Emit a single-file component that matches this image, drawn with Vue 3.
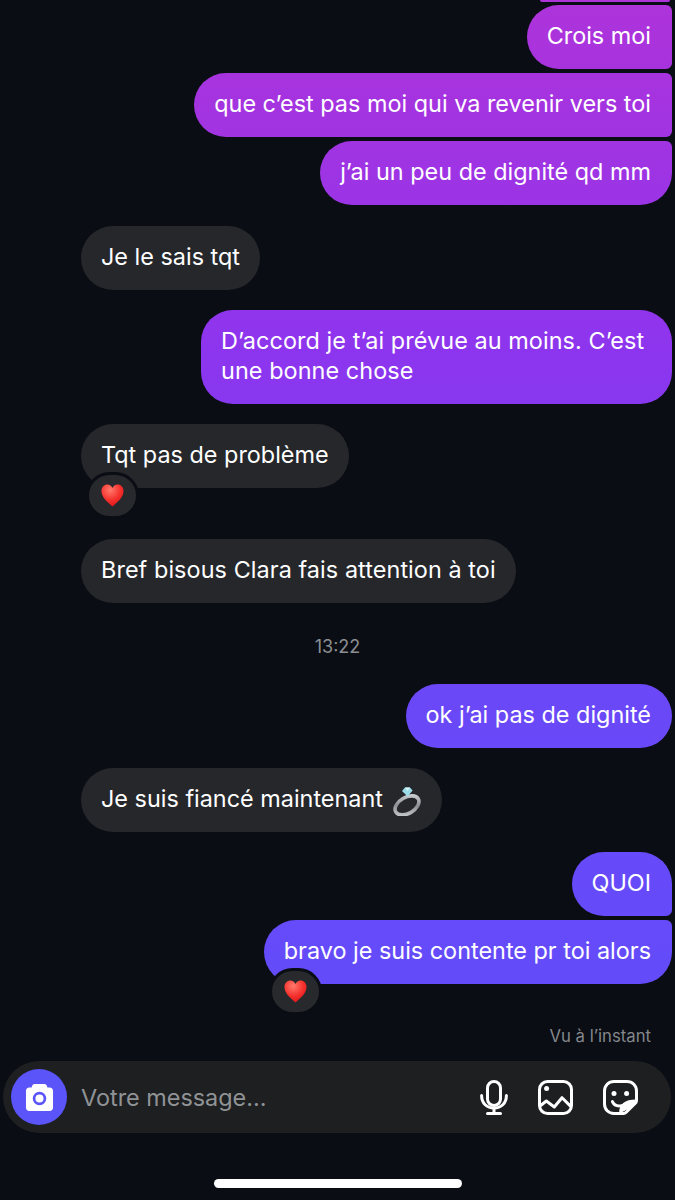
<template>
  <div class="screen">
    <svg class="defs" width="0" height="0">
      <defs>
        <radialGradient id="heartFill" cx="0.4" cy="0.25" r="0.85">
          <stop offset="0" stop-color="#ff7a6c" />
          <stop offset="0.55" stop-color="#f5302c" />
          <stop offset="1" stop-color="#d90f18" />
        </radialGradient>
        <linearGradient id="ringFill" x1="0" y1="1" x2="1" y2="0">
          <stop offset="0" stop-color="#d2d5d7" />
          <stop offset="0.5" stop-color="#8b8f93" />
          <stop offset="1" stop-color="#dcdfe1" />
        </linearGradient>
      </defs>
    </svg>

    <div class="messages">
      <div class="top-sliver"></div>
      <template v-for="msg in messages" :key="msg.id">
        <div v-if="msg.time" class="time">{{ msg.time }}</div>
        <div v-else class="row" :class="[msg.mine ? 'mine' : 'theirs', msg.spacing]">
          <div class="bubble" :class="msg.shape">
            <span class="bubble-text">{{ msg.text }}</span>
            <svg v-if="msg.ring" class="ring" viewBox="0 0 30 30">
              <ellipse cx="15" cy="19.4" rx="13" ry="8" transform="rotate(-30 15 19.4)" fill="none" stroke="url(#ringFill)" stroke-width="3.6" />
              <path d="M10 5 L13 1.4 L18 1.4 L20.6 4.4 L15.6 10.4 Z" fill="#9adbe8" />
              <path d="M13 1.4 L18 1.4 L15.6 5 Z" fill="#d9f5fa" />
            </svg>
            <div v-if="msg.reaction" class="reaction">
              <svg class="heart" viewBox="0 0 24 24">
                <path d="M12 23.4 C5.5 18 .5 13.4 .5 7.4 C.5 3.2 3.4 .6 6.7 .6 C9 .6 11 1.9 12 4.2 C13 1.9 15 .6 17.3 .6 C20.6 .6 23.5 3.2 23.5 7.4 C23.5 13.4 18.5 18 12 23.4 Z" fill="url(#heartFill)" />
              </svg>
            </div>
          </div>
        </div>
      </template>
      <div class="seen">Vu à l’instant</div>
    </div>

    <div class="composer">
      <div class="camera">
        <svg viewBox="0 0 30 30" width="29" height="29">
          <path fill="#fff" d="M10 1 H20 C21.4 1 22.2 1.8 22.7 3.2 L23.2 4.6 H25.4 C27.6 4.6 29 6 29 8.2 V25.4 C29 27.6 27.6 29 25.4 29 H4.6 C2.4 29 1 27.6 1 25.4 V8.2 C1 6 2.4 4.6 4.6 4.6 H6.8 L7.3 3.2 C7.8 1.8 8.6 1 10 1 Z" />
          <circle cx="15" cy="16" r="5.6" fill="none" stroke="#5a54f9" stroke-width="2.8" />
        </svg>
      </div>
      <span class="placeholder">Votre message...</span>
      <div class="tools">
        <svg class="tool mic" viewBox="0 0 28 35" fill="none" stroke="#fff" stroke-width="3">
          <rect x="7.5" y="1.5" width="13" height="24" rx="6.5" />
          <path d="M1.6 15.5 C1.6 23.5 7 28 14 28 C21 28 26.4 23.5 26.4 15.5" stroke-linecap="round" />
          <path d="M14 28 V33.4 M7.5 33.4 H20.5" stroke-linecap="round" />
        </svg>
        <svg class="tool" viewBox="0 0 35 35" fill="none" stroke="#fff" stroke-width="3">
          <rect x="1.5" y="1.5" width="32" height="32" rx="8" />
          <circle cx="8.6" cy="8.6" r="2.5" fill="#fff" stroke="none" />
          <path d="M2 26 L8.3 21 L16.3 27 L24 17.7 L33 26.6" stroke-linejoin="round" />
        </svg>
        <svg class="tool" viewBox="0 0 35 35" fill="none" stroke="#fff" stroke-width="3">
          <path d="M20.5 33.5 H11 C5.5 33.5 1.5 29.5 1.5 24 V11 C1.5 5.5 5.5 1.5 11 1.5 H24 C29.5 1.5 33.5 5.5 33.5 11 V20.5 C33.5 21.5 33 22.5 32.3 23.2 L23.2 32.3 C22.5 33 21.5 33.5 20.5 33.5 Z" stroke-linejoin="round" />
          <path d="M17 33 C16.6 25 22 20.4 33 20.4 C32 24.5 26 28 19.5 31 Z" fill="#fff" stroke-width="1.6" stroke-linejoin="round" />
          <circle cx="11" cy="13.6" r="2.5" fill="#fff" stroke="none" />
          <circle cx="23.6" cy="13.6" r="2.5" fill="#fff" stroke="none" />
          <path d="M9.4 21.6 C11 25 14 26.6 18.6 25.6" stroke-linecap="round" />
        </svg>
      </div>
    </div>

    <div class="home-bar"></div>
  </div>
</template>

<script setup>
const messages = [
  { id: 1, mine: true, text: 'Crois moi', shape: 'tail-both' },
  { id: 2, mine: true, text: 'que c’est pas moi qui va revenir vers toi', shape: 'tail-both' },
  { id: 3, mine: true, text: 'j’ai un peu de dignité qd mm', shape: 'tail-top' },
  { id: 4, mine: false, text: 'Je le sais tqt', spacing: 'switch' },
  { id: 5, mine: true, text: 'D’accord je t’ai prévue au moins. C’est une bonne chose', shape: 'wrapped', spacing: 'loose' },
  { id: 6, mine: false, text: 'Tqt pas de problème', reaction: true, spacing: 'loose' },
  { id: 7, mine: false, text: 'Bref bisous Clara fais attention à toi', shape: 'roomy', spacing: 'reacted' },
  { id: 'time', time: '13:22' },
  { id: 8, mine: true, text: 'ok j’ai pas de dignité', spacing: 'flush' },
  { id: 9, mine: false, text: 'Je suis fiancé maintenant', ring: true, spacing: 'loose' },
  { id: 10, mine: true, text: 'QUOI', shape: 'tail-bottom', spacing: 'loose' },
  { id: 11, mine: true, text: 'bravo je suis contente pr toi alors', shape: 'tail-top', reaction: true }
]
</script>

<style scoped>
* { box-sizing: border-box; }
.screen { width: 675px; height: 1200px; overflow: hidden; background: #0a0d14; display: flex; flex-direction: column; font-family: Inter, sans-serif; color: #fff; }
.defs { position: absolute; }
.messages { display: flex; flex-direction: column; height: 1061px; }
.top-sliver { width: 130px; height: 2px; margin-left: 540px; margin-bottom: -1px; border-radius: 0 0 6px 6px; background: #ae33da; }
.row { display: flex; margin-top: 4px; }
.row.loose { margin-top: 20px; }
.row.switch { margin-top: 21px; }
.row.reacted { margin-top: 51px; }
.row.flush { margin-top: 0; }
.theirs { padding-left: 81px; }
.mine { justify-content: flex-end; padding-right: 3px; }
.bubble { position: relative; display: flex; align-items: center; padding: 16px 21px 18px 20px; border-radius: 32px; font-size: 23.42px; line-height: 30px; white-space: nowrap; }
.theirs .bubble { background: #25272b; padding-left: 20px; padding-right: 20px; }
.mine .bubble { background: linear-gradient(180deg, #ae33da 0, #8d35ee 350px, #6a48f8 700px, #5f4efc 1200px) fixed; }
.tail-both { border-radius: 32px 6px 6px 32px; }
.tail-top { border-radius: 32px 6px 32px 32px; }
.tail-bottom { border-radius: 32px 32px 6px 32px; }
.bubble.wrapped { width: 471px; white-space: normal; padding-right: 24px; letter-spacing: .07px; }
.bubble.roomy { letter-spacing: .07px; }
.ring { width: 30px; height: 30px; margin-left: 9px; margin-top: 2px; margin-bottom: -2px; }
.reaction { position: absolute; left: 5px; bottom: -31px; width: 53px; height: 47px; display: flex; align-items: center; justify-content: center; background: #27292c; border: 3px solid #0a0d14; border-radius: 24px; }
.heart { width: 23px; height: 23px; }
.time { margin-top: 34px; margin-bottom: 27px; text-align: center; font-size: 18px; line-height: 20px; color: #8c8f93; }
.seen { margin-top: 42px; padding-right: 24px; text-align: right; font-size: 16.7px; line-height: 20px; color: #84878b; }
.composer { display: flex; align-items: center; width: 668px; height: 72px; margin-left: 3px; padding: 0 33px 0 8px; border-radius: 36px; background: #1e1f21; }
.camera { display: flex; align-items: center; justify-content: center; width: 56px; height: 56px; border-radius: 50%; background: #5a54f9; flex: none; }
.placeholder { margin-left: 14px; font-size: 23.4px; color: #909396; }
.tools { margin-left: auto; display: flex; align-items: center; gap: 30px; }
.tool { width: 35px; height: 35px; display: block; }
.tool.mic { width: 28px; }
.home-bar { width: 248px; height: 9px; margin: 46px auto 0; border-radius: 5px; background: #fff; }
</style>
